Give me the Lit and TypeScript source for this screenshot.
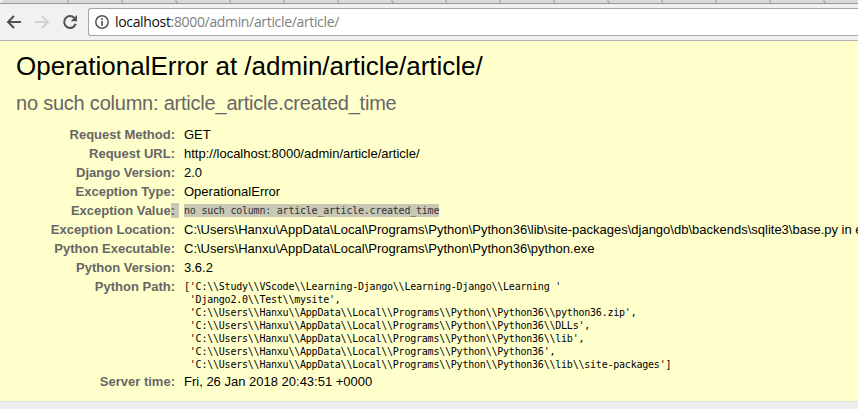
import { LitElement, html, css } from "lit";
import { customElement } from "lit/decorators.js";

const BASE = "'C:\\\\Users\\\\Hanxu\\\\AppData\\\\Local\\\\Programs\\\\Python\\\\Python36";
const PATHS = [
  "['C:\\\\Study\\\\VScode\\\\Learning-Django\\\\Learning-Django\\\\Learning '",
  " 'Django2.0\\\\Test\\\\mysite',",
  " " + BASE + "\\\\python36.zip',",
  " " + BASE + "\\\\DLLs',",
  " " + BASE + "\\\\lib',",
  " " + BASE + "',",
  " " + BASE + "\\\\lib\\\\site-packages']",
].join("\n");

@customElement("browser-bar")
class BrowserBar extends LitElement {
  static styles = css`
    :host { display: block; }
    .tabs { display: flex; height: 3px; background: #dadada; border-bottom: 1px solid #999; overflow: hidden; }
    .tabs svg { display: block; }
    .bar { display: flex; align-items: center; height: 36px; background: #f1f1f1; border-bottom: 1px solid #b3b1b6; }
    .nav { display: block; flex: none; width: 88px; height: 36px; }
    .omni { box-sizing: border-box; flex: 1; height: 28px; border: 1px solid #a6a6a6; border-right: 0;
      border-radius: 3px 0 0 3px; background: #fff; display: flex; align-items: center; }
    .info { display: block; flex: none; width: 26px; height: 26px; }
    .url { font: 14px/24px "Open Sans", sans-serif; color: #808080; white-space: pre; letter-spacing: -0.34px; }
    .host { color: #111; }
  `;
  render() {
    const seams = Array.from({ length: 16 }, (_, i) => 67.5 + i * 54);
    const seamPath = seams.map((x) => `M${x} 0l1.6 3`).join("");
    return html`
      <div class="tabs">
        <svg width="858" height="3" viewBox="0 0 858 3">
          <path d="M0 0H3L1 3H0Z" fill="#f1f1f1" />
          <path d=${seamPath} stroke="#a9a9a9" stroke-width="1.3" fill="none" />
        </svg>
      </div>
      <div class="bar">
        <svg class="nav" viewBox="0 4 88 36" fill="none">
          <path d="M21 22H8.5M14 16L8 22L14 28" stroke="#505050" stroke-width="2" />
          <path d="M35 22H47.5M42 16L48 22L42 28" stroke="#d2d2d2" stroke-width="2" />
          <path d="M74.4 18A5.9 5.9 0 1 0 75.7 23.8" stroke="#505050" stroke-width="2" />
          <path d="M77 15V21.3H70.7Z" fill="#505050" />
        </svg>
        <div class="omni">
          <svg class="info" viewBox="0 0 26 26" fill="none">
            <circle cx="13" cy="13" r="6.2" stroke="#555" stroke-width="1.5" />
            <path d="M13 12V16.8M13 9.2V10.9" stroke="#555" stroke-width="1.7" />
          </svg>
          <span class="url"><span class="host">localhost</span>:8000/admin/article/article/</span>
        </div>
      </div>
    `;
  }
}

@customElement("app-root")
class AppRoot extends LitElement {
  static styles = css`
    :host { display: flex; flex-direction: column; height: 409px; overflow: hidden; background: #eee;
      font-family: "Liberation Sans", Arial, sans-serif; font-size: 13px; color: #000; }
    .summary { box-sizing: border-box; height: 361px; background: #ffffcc; border-bottom: 1px solid #ddd; padding: 10px 0 0 16px; }
    h1 { margin: 0; font-size: 26px; line-height: 30px; font-weight: normal; white-space: nowrap; }
    h2 { margin: 10px 0 0; font-size: 20px; line-height: 24px; font-weight: normal; color: #666; white-space: nowrap; letter-spacing: -0.22px; }
    .meta { display: grid; grid-template-columns: 159px 1fr; column-gap: 9px; margin-top: 11px; line-height: 15px; }
    .meta > * { padding: 1px 0 3px; white-space: pre; }
    .label { font-weight: bold; color: #666; text-align: right; }
    .colon { background: #c8c8b4; padding: 0 4px 0 0; margin-right: -4px; }
    .meta > .mono { padding: 2px 0; font: 10px/13px "DejaVu Sans Mono", monospace; letter-spacing: -0.22px; }
    .pick { display: block; width: max-content; height: 13px; background: #c8c8b4; color: #333; }
  `;
  row(label: string, value: string) {
    return html`<div class="label">${label}:</div><div class="value">${value}</div>`;
  }
  render() {
    return html`
      <browser-bar></browser-bar>
      <div class="summary">
        <h1>OperationalError at /admin/article/article/</h1>
        <h2>no such column: article_article.created_time</h2>
        <div class="meta">
          ${this.row("Request Method", "GET")}
          ${this.row("Request URL", "http://localhost:8000/admin/article/article/")}
          ${this.row("Django Version", "2.0")}
          ${this.row("Exception Type", "OperationalError")}
          <div class="label">Exception Value<span class="colon">:</span></div>
          <div class="mono"><span class="pick">no such column: article_article.created_time</span></div>
          ${this.row("Exception Location", "C:\\Users\\Hanxu\\AppData\\Local\\Programs\\Python\\Python36\\lib\\site-packages\\django\\db\\backends\\sqlite3\\base.py in execute, line 303")}
          ${this.row("Python Executable", "C:\\Users\\Hanxu\\AppData\\Local\\Programs\\Python\\Python36\\python.exe")}
          ${this.row("Python Version", "3.6.2")}
          <div class="label">Python Path:</div>
          <div class="mono">${PATHS}</div>
          ${this.row("Server time", "Fri, 26 Jan 2018 20:43:51 +0000")}
        </div>
      </div>
    `;
  }
}
